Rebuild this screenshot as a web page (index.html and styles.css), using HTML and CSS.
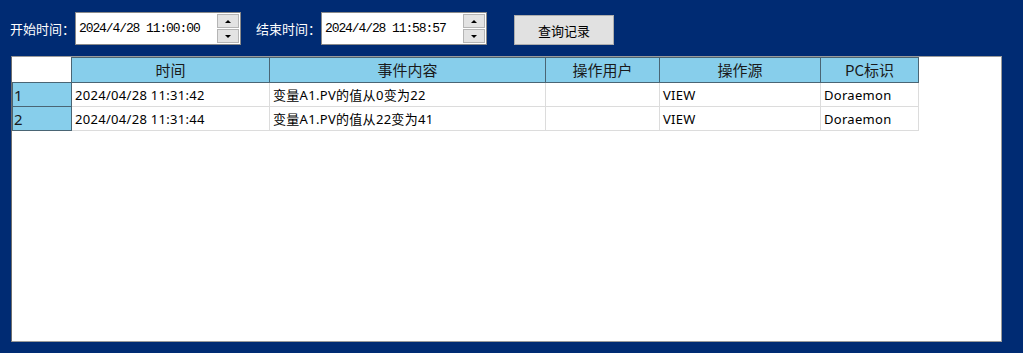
FILE: index.html
```html
<!DOCTYPE html>
<html lang="zh">
<head>
<meta charset="utf-8">
<link rel="stylesheet" href="styles.css">
</head>
<body>
<div class="toolbar">
  <span class="label">开始时间：</span>
  <div class="dtp">
    <span class="dtp-text">2024/4/28 11:00:00</span>
    <div class="spin">
      <div class="spin-btn"><span class="tri up"></span></div>
      <div class="spin-btn"><span class="tri down"></span></div>
    </div>
  </div>
  <span class="label label-end">结束时间：</span>
  <div class="dtp">
    <span class="dtp-text">2024/4/28 11:58:57</span>
    <div class="spin">
      <div class="spin-btn"><span class="tri up"></span></div>
      <div class="spin-btn"><span class="tri down"></span></div>
    </div>
  </div>
  <button class="query">查询记录</button>
</div>
<div class="grid">
  <table class="tbl">
    <colgroup>
      <col class="c-rh"><col class="c-time"><col class="c-event"><col class="c-user"><col class="c-src"><col class="c-pc">
    </colgroup>
    <thead>
      <tr>
        <th class="corner"></th>
        <th>时间</th>
        <th>事件内容</th>
        <th>操作用户</th>
        <th>操作源</th>
        <th>PC标识</th>
      </tr>
    </thead>
    <tbody>
      <tr>
        <td class="rh">1</td>
        <td>2024/04/28 11:31:42</td>
        <td>变量A1.PV的值从0变为22</td>
        <td></td>
        <td>VIEW</td>
        <td>Doraemon</td>
      </tr>
      <tr>
        <td class="rh">2</td>
        <td>2024/04/28 11:31:44</td>
        <td>变量A1.PV的值从22变为41</td>
        <td></td>
        <td>VIEW</td>
        <td>Doraemon</td>
      </tr>
    </tbody>
  </table>
</div>
</body>
</html>
```
FILE: styles.css
```css
html, body {
  margin: 0;
  padding: 0;
}
body {
  background: #002b73;
  width: 1023px;
  height: 353px;
  overflow: hidden;
  font-family: "Noto Sans CJK SC", sans-serif;
}
.toolbar {
  display: flex;
  align-items: center;
  height: 33px;
  padding: 12px 0 0 10px;
}
.label {
  color: #ffffff;
  font-size: 13px;
  width: 65px;
  line-height: 33px;
  white-space: nowrap;
}
.label-end {
  margin-left: 15px;
}
.dtp {
  display: flex;
  align-items: stretch;
  width: 164px;
  height: 31px;
  background: #ffffff;
  border: 1px solid #8a8a8a;
}
.dtp-text {
  flex: 1;
  font-family: "Liberation Mono", "Noto Sans CJK SC", monospace;
  font-size: 13px;
  letter-spacing: -1.1px;
  color: #000;
  line-height: 31px;
  padding-left: 3px;
  white-space: pre;
}
.spin {
  width: 22px;
  display: flex;
  flex-direction: column;
  gap: 1px;
  padding: 1px 1px 1px 0;
  background: #ffffff;
}
.spin-btn {
  flex: 1;
  background: #e3e3e3;
  border: 1px solid #b5b5b5;
  display: flex;
  align-items: center;
  justify-content: center;
}
.tri {
  width: 0;
  height: 0;
  border-left: 3px solid transparent;
  border-right: 3px solid transparent;
}
.tri.up {
  border-bottom: 3px solid #000;
}
.tri.down {
  border-top: 3px solid #000;
}
.query {
  margin-left: 27px;
  margin-top: 3px;
  width: 100px;
  height: 30px;
  background: #e1e1e1;
  border: 1px solid #adadad;
  font-family: "Noto Sans CJK SC", sans-serif;
  font-size: 13px;
  color: #000;
  padding: 0;
}
.grid {
  margin: 11px 0 0 11px;
  width: 989px;
  height: 284px;
  background: #ffffff;
  border: 1px solid #9a9a9a;
  border-left-color: #6e6e6e;
}
.tbl {
  border-collapse: collapse;
  table-layout: fixed;
  width: 906px;
}
.c-rh { width: 59px; }
.c-time { width: 198px; }
.c-event { width: 276px; }
.c-user { width: 114px; }
.c-src { width: 161px; }
.c-pc { width: 98px; }
.tbl th {
  height: 24px;
  padding: 0;
  background: #87ceeb;
  border: 1px solid #4a6574;
  font-weight: normal;
  font-size: 15px;
  color: #1a1a1a;
  text-align: center;
  line-height: 22px;
}
.tbl th.corner {
  background: #ffffff;
  border: none;
  border-bottom: 1px solid #4a6574;
}
.tbl td {
  height: 23px;
  padding: 0 0 0 3px;
  border: 1px solid #dcdcdc;
  font-family: "Noto Sans", "Noto Sans CJK SC", sans-serif;
  font-size: 13px;
  letter-spacing: 0.3px;
  color: #000;
  white-space: nowrap;
  overflow: hidden;
}
.tbl td.rh {
  background: #87ceeb;
  border: 1px solid #4a6574;
  font-size: 15px;
  padding-left: 1px;
  letter-spacing: 0;
  color: #1a1a1a;
}
```
